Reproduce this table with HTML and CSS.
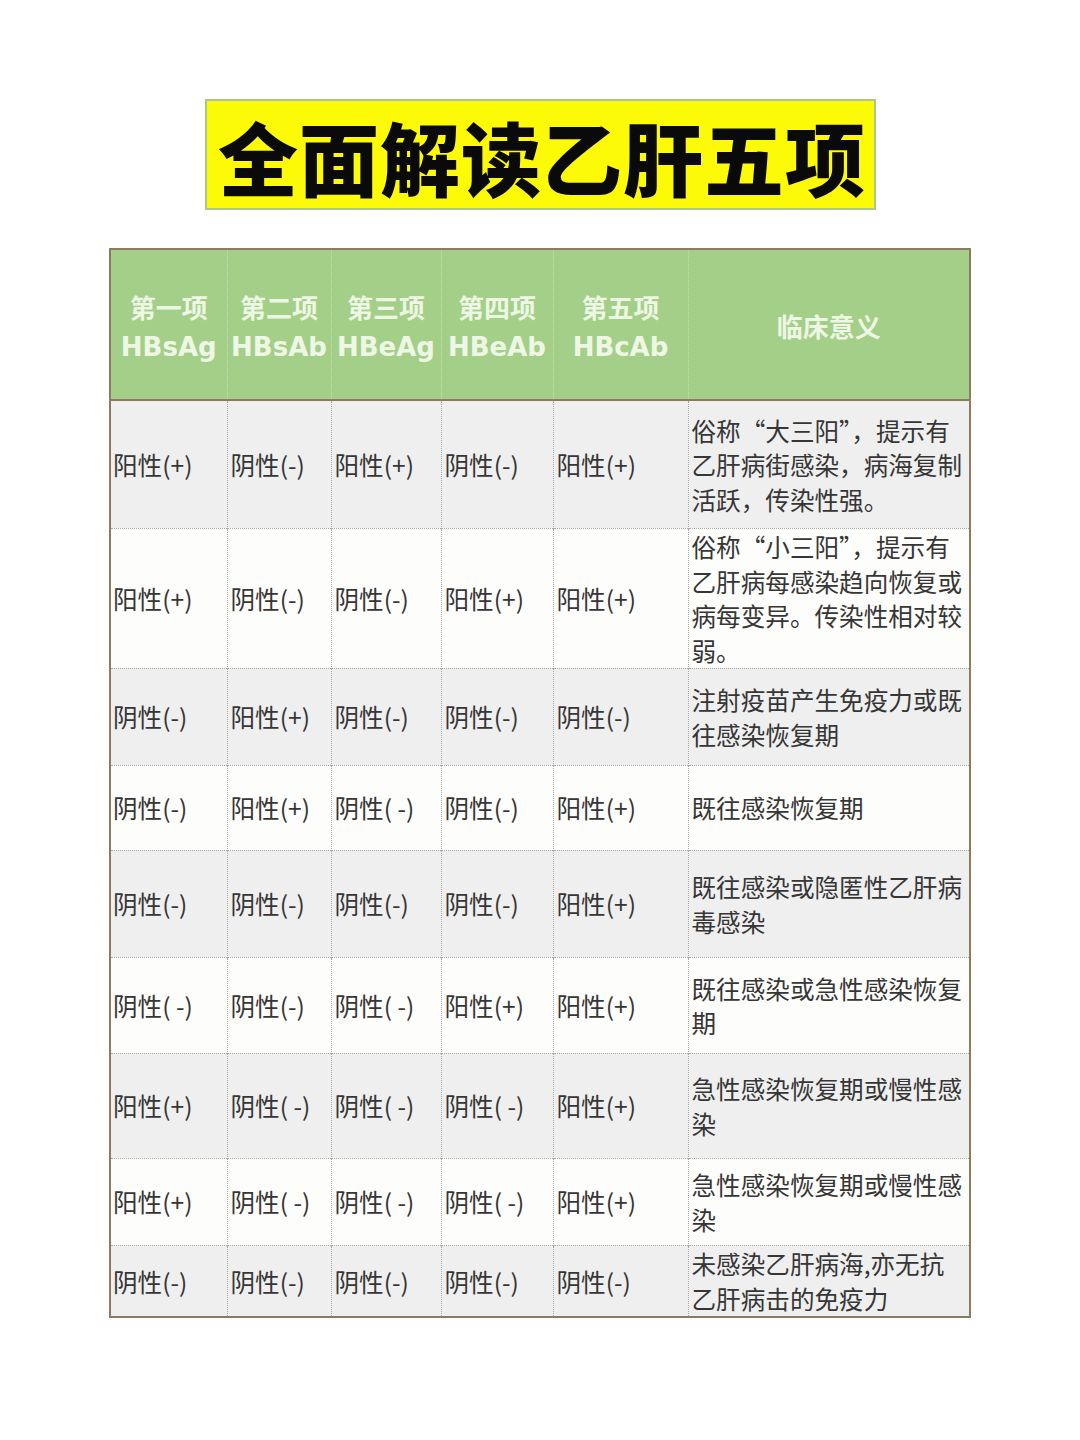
FILE: index.html
```html
<!DOCTYPE html>
<html lang="zh-CN">
<head>
<meta charset="utf-8">
<title>全面解读乙肝五项</title>
<link rel="stylesheet" href="styles.css">
</head>
<body>
<div class="page">
  <div class="title-box"><h1 class="title">全面解读乙肝五项</h1></div>
  <table class="grid">
    <colgroup>
      <col class="c1"><col class="c2"><col class="c3"><col class="c4"><col class="c5"><col class="c6">
    </colgroup>
    <thead>
      <tr class="head">
        <th>第一项<br>HBsAg</th>
        <th>第二项<br>HBsAb</th>
        <th>第三项<br>HBeAg</th>
        <th>第四项<br>HBeAb</th>
        <th>第五项<br>HBcAb</th>
        <th>临床意义</th>
      </tr>
    </thead>
    <tbody>
      <tr class="r1 gray"><td>阳性(+)</td><td>阴性(-)</td><td>阳性(+)</td><td>阴性(-)</td><td>阳性(+)</td><td class="mean">俗称“大三阳”，提示有乙肝病街感染，病海复制活跃，传染性强。</td></tr>
      <tr class="r2 white"><td>阳性(+)</td><td>阴性(-)</td><td>阴性(-)</td><td>阳性(+)</td><td>阳性(+)</td><td class="mean">俗称“小三阳”，提示有乙肝病每感染趋向恢复或病每变异。传染性相对较弱。</td></tr>
      <tr class="r3 gray"><td>阴性(-)</td><td>阳性(+)</td><td>阴性(-)</td><td>阴性(-)</td><td>阴性(-)</td><td class="mean">注射疫苗产生免疫力或既往感染恢复期</td></tr>
      <tr class="r4 white"><td>阴性(-)</td><td>阳性(+)</td><td>阴性( -)</td><td>阴性(-)</td><td>阳性(+)</td><td class="mean">既往感染恢复期</td></tr>
      <tr class="r5 gray"><td>阴性(-)</td><td>阴性(-)</td><td>阴性(-)</td><td>阴性(-)</td><td>阳性(+)</td><td class="mean">既往感染或隐匿性乙肝病毒感染</td></tr>
      <tr class="r6 white"><td>阴性( -)</td><td>阴性(-)</td><td>阴性( -)</td><td>阳性(+)</td><td>阳性(+)</td><td class="mean">既往感染或急性感染恢复期</td></tr>
      <tr class="r7 gray"><td>阳性(+)</td><td>阴性( -)</td><td>阴性( -)</td><td>阴性( -)</td><td>阳性(+)</td><td class="mean">急性感染恢复期或慢性感染</td></tr>
      <tr class="r8 white"><td>阳性(+)</td><td>阴性( -)</td><td>阴性( -)</td><td>阴性( -)</td><td>阳性(+)</td><td class="mean">急性感染恢复期或慢性感染</td></tr>
      <tr class="r9 gray"><td>阴性(-)</td><td>阴性(-)</td><td>阴性(-)</td><td>阴性(-)</td><td>阴性(-)</td><td class="mean">未感染乙肝病海,亦无抗乙肝病击的免疫力</td></tr>
    </tbody>
  </table>
</div>
</body>
</html>
```

FILE: styles.css
```css
html, body {
  margin: 0;
  padding: 0;
  background: #ffffff;
}
body {
  font-family: "Noto Sans CJK SC", "Noto Sans", sans-serif;
}
.page {
  width: 1080px;
  padding-top: 99px;
  display: flex;
  flex-direction: column;
  align-items: center;
}
.title-box {
  width: 667px;
  height: 107px;
  background: #fdfa08;
  border: 2px solid #a9c98c;
  display: flex;
  align-items: center;
  justify-content: center;
}
.title {
  margin: 0;
  font-size: 80px;
  font-weight: 900;
  color: #0a0a0a;
  line-height: 1;
  letter-spacing: 1px;
  padding-left: 4px;
}
.grid {
  margin-top: 38px;
  width: 860px;
  table-layout: fixed;
  border-collapse: collapse;
  border: 2px solid #8c7b5e;
}
.c1 { width: 117px; }
.c2 { width: 104px; }
.c3 { width: 110px; }
.c4 { width: 112px; }
.c5 { width: 135px; }
.c6 { width: 282px; }
.head {
  height: 151px;
  background: #a3cf89;
}
.head th {
  font-family: "DejaVu Sans", "Noto Sans CJK SC", sans-serif;
  color: #eef7e4;
  font-size: 26px;
  font-weight: 700;
  line-height: 38px;
  padding: 0;
  text-align: center;
  border-left: 1px dotted #c7e0b3;
  border-bottom: 2px solid #8c7b5e;
  white-space: nowrap;
  padding-top: 6px;
}
.head th:first-child { border-left: none; }
td {
  font-size: 24.6px;
  color: #363636;
  line-height: 34.5px;
  padding: 0 2px 0 3px;
  vertical-align: middle;
  border-left: 1px dotted #a8a8a8;
  border-top: 1px dotted #a8a8a8;
  white-space: nowrap;
}
td:first-child { border-left: none; padding-left: 2px; }
td.mean {
  white-space: normal;
  padding-left: 3px;
  padding-right: 1px;
}
.gray { background: #efefef; }
.white { background: #fdfdfb; }
.r1 { height: 128px; }
.r2 { height: 140px; }
.r3 { height: 97px; }
.r4 { height: 85px; }
.r5 { height: 107px; }
.r6 { height: 96px; }
.r7 { height: 105px; }
.r8 { height: 87px; }
.r9 { height: 72px; }
```
